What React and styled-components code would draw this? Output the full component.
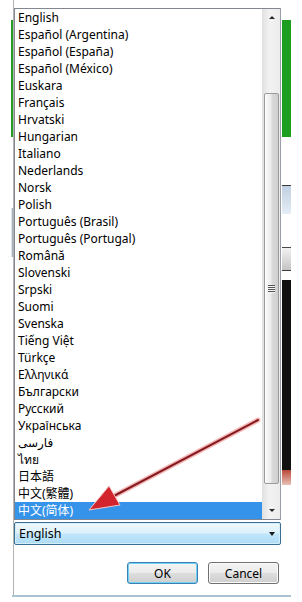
import React from "react"
import styled, { createGlobalStyle } from "styled-components"

const languages = [
  "English",
  "Español (Argentina)",
  "Español (España)",
  "Español (México)",
  "Euskara",
  "Français",
  "Hrvatski",
  "Hungarian",
  "Italiano",
  "Nederlands",
  "Norsk",
  "Polish",
  "Português (Brasil)",
  "Português (Portugal)",
  "Română",
  "Slovenski",
  "Srpski",
  "Suomi",
  "Svenska",
  "Tiếng Việt",
  "Türkçe",
  "Ελληνικά",
  "Български",
  "Русский",
  "Українська",
  "فارسی",
  "ไทย",
  "日本語",
  "中文(繁體)",
  "中文(简体)",
]

// bits of the windows behind the dialog, top to bottom
const leftBands = [
  { h: 20, bg: "#ffffff" },
  { h: 117, bg: "#23a023" },
  { h: 71, bg: "#ffffff" },
  { h: 49, bg: "linear-gradient(to right, #ffffff, #7f95aa)" },
]

const rightBands = [
  { h: 20, bg: "#ffffff" },
  { h: 117, bg: "#1e9e1e" },
  { h: 48, bg: "#ffffff" },
  { h: 1, bg: "#3a3a3a" },
  { h: 28, bg: "linear-gradient(#c0d0e4, #e6edf5)" },
  { h: 33, bg: "#ffffff" },
  { h: 1, bg: "#4a4a4a" },
  { h: 22, bg: "linear-gradient(#f2f2f2, #c4c4c4)" },
  { h: 1, bg: "#3a3a3a" },
  { h: 9, bg: "#ffffff" },
  { h: 190, bg: "#111111" },
  { h: 15, bg: "linear-gradient(#b9483a, #e9c2b6)" },
]

export default function App() {
  return (
    <>
      <GlobalStyle />
      <Screen>
        <Backdrop>
          <LeftStrip>
            {leftBands.map((b, i) => (
              <Band key={i} h={b.h} bg={b.bg} />
            ))}
          </LeftStrip>
        </Backdrop>

        <Dialog>
          <ListBox>
            <Options>
              {languages.map((lang, i) => (
                <Option key={lang} selected={i === languages.length - 1}>
                  {lang}
                </Option>
              ))}
            </Options>
            <ScrollBar>
              <ArrowButton>
                <Triangle up />
              </ArrowButton>
              <Track>
                <Thumb>
                  <Grip />
                </Thumb>
              </Track>
              <ArrowButton>
                <Triangle />
              </ArrowButton>
            </ScrollBar>
          </ListBox>

          <Combo>
            <span>English</span>
            <ComboArrow />
          </Combo>

          <ButtonRow>
            <Button primary>OK</Button>
            <Button>Cancel</Button>
          </ButtonRow>
        </Dialog>

        <Backdrop>
          <RightStrip>
            {rightBands.map((b, i) => (
              <Band key={i} h={b.h} bg={b.bg} />
            ))}
          </RightStrip>
        </Backdrop>

        <FooterLine />

        <Annotation viewBox="0 0 302 602" width="302" height="602">
          <line
            x1="258"
            y1="420"
            x2="112"
            y2="497"
            stroke="#f3b9b9"
            strokeWidth="5"
            strokeLinecap="round"
          />
          <line
            x1="258"
            y1="420"
            x2="112"
            y2="497"
            stroke="#861a1f"
            strokeWidth="2"
            strokeLinecap="round"
          />
          <polygon
            points="89,510 109,486 120,505"
            fill="#d2242c"
            stroke="#f5c3c3"
            strokeWidth="1"
          />
        </Annotation>
      </Screen>
    </>
  )
}

const GlobalStyle = createGlobalStyle`
  html, body {
    margin: 0;
    padding: 0;
    background: #ffffff;
  }
  body {
    font-family: "Noto Sans", "Noto Sans CJK SC", "DejaVu Sans", sans-serif;
    font-size: 12px;
    color: #000000;
  }
`

const Screen = styled.div`
  position: relative;
  width: 302px;
  height: 602px;
  overflow: hidden;
  background: #ffffff;
  display: grid;
  grid-template-columns: 14px 267px 21px;
  grid-template-rows: 595px auto;
`

const Backdrop = styled.div`
  display: flex;
  flex-direction: column;
`

const LeftStrip = styled.div`
  width: 3px;
  margin-left: 11px;
  height: 100%;
  border-right: 1px solid #b4b4b4;
  box-sizing: border-box;
  display: flex;
  flex-direction: column;
`

const RightStrip = styled.div`
  width: 9px;
  margin-left: 1px;
  display: flex;
  flex-direction: column;
`

const Band = styled.div`
  height: ${p => p.h}px;
  flex-shrink: 0;
  background: ${p => p.bg};
`

const Dialog = styled.div`
  display: flex;
  flex-direction: column;
  padding-top: 8px;
`

const ListBox = styled.div`
  height: 512px;
  box-sizing: border-box;
  border: 1px solid #828790;
  border-right-color: #9a9ea6;
  background: #ffffff;
  display: flex;
`

const Options = styled.div`
  flex: 1;
  overflow: hidden;
  display: flex;
  flex-direction: column;
`

const Option = styled.div`
  height: 17px;
  line-height: 17px;
  flex-shrink: 0;
  padding-left: 3px;
  white-space: nowrap;
  text-align: left;
  color: ${p => (p.selected ? "#ffffff" : "#000000")};
  background: ${p => (p.selected ? "#3593ea" : "transparent")};
`

const ScrollBar = styled.div`
  width: 17px;
  display: flex;
  flex-direction: column;
  background: linear-gradient(to right, #e4e4e4, #f2f2f2 40%, #ececec);
  border-left: 1px solid #e0e0e0;
`

const ArrowButton = styled.div`
  height: 17px;
  flex-shrink: 0;
  display: flex;
  align-items: center;
  justify-content: center;
`

const Triangle = styled.div`
  width: 0;
  height: 0;
  border-left: 3px solid transparent;
  border-right: 3px solid transparent;
  ${p =>
    p.up
      ? "border-bottom: 3px solid #2a2a2a;"
      : "border-top: 3px solid #2a2a2a;"}
`

const Track = styled.div`
  flex: 1;
  display: flex;
  flex-direction: column;
  padding: 67px 0 18px;
`

const Thumb = styled.div`
  flex: 1;
  margin: 0 1px;
  border: 1px solid #9a9a9a;
  border-radius: 2px;
  background: linear-gradient(
    to right,
    #fbfbfb,
    #ececec 45%,
    #dadada 55%,
    #cfcfcf
  );
  box-shadow: inset 1px 0 0 #ffffff;
  display: flex;
  align-items: center;
  justify-content: center;
`

const Grip = styled.div`
  width: 7px;
  height: 8px;
  background: repeating-linear-gradient(
    #555555 0,
    #555555 1px,
    #f4f4f4 1px,
    #f4f4f4 2px
  );
`

const Combo = styled.div`
  margin-top: 2px;
  height: 23px;
  box-sizing: border-box;
  border: 1px solid #3c6e94;
  border-radius: 2px;
  padding: 0 5px 0 4px;
  background: linear-gradient(#eef8fe, #dcf1fc 48%, #c2e6fb 52%, #acdcf6);
  box-shadow: inset 0 0 0 1px #d4eefc;
  display: flex;
  align-items: center;
  justify-content: space-between;
  font-size: 12.5px;
`

const ComboArrow = styled.div`
  width: 0;
  height: 0;
  border-left: 3.5px solid transparent;
  border-right: 3.5px solid transparent;
  border-top: 4px solid #1a1a1a;
`

const ButtonRow = styled.div`
  margin-top: 17px;
  display: flex;
  justify-content: flex-end;
  gap: 10px;
  padding-right: 2px;
`

const Button = styled.div`
  width: 71px;
  height: 22px;
  box-sizing: border-box;
  border: 1px solid ${p => (p.primary ? "#3c7fb1" : "#707070")};
  border-radius: 3px;
  background: linear-gradient(#f4f4f4, #ebebeb 48%, #dddddd 52%, #cfcfcf);
  box-shadow: inset 0 0 0 1px
    ${p => (p.primary ? "#6fd2f7" : "#fbfbfb")};
  display: flex;
  align-items: center;
  justify-content: center;
  font-size: 12px;
`

const FooterLine = styled.div`
  grid-column: 1 / -1;
  margin-left: 12px;
  width: 279px;
  height: 2px;
  background: #a9c3d2;
`

const Annotation = styled.svg`
  position: absolute;
  left: 0;
  top: 0;
  pointer-events: none;
`
